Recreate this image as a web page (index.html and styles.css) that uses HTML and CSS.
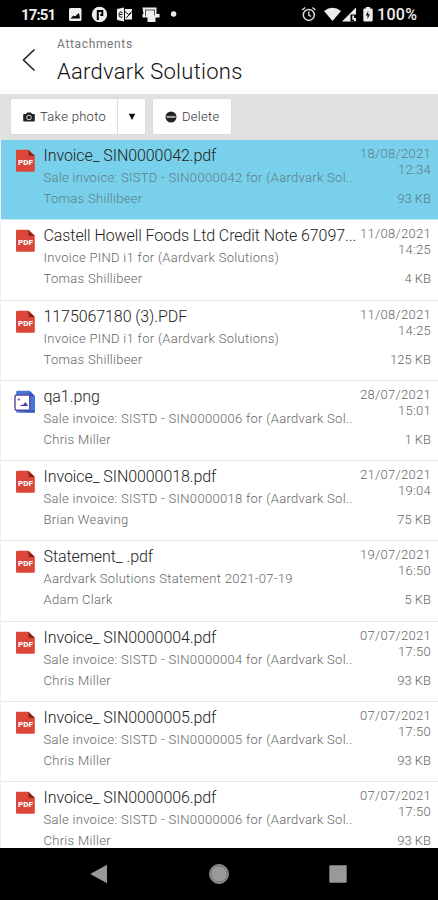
FILE: index.html
```html
<!DOCTYPE html>
<html lang="en">
<head>
<meta charset="utf-8">
<title>Attachments</title>
<link rel="stylesheet" href="styles.css">
</head>
<body>
<svg width="0" height="0" class="defs">
  <symbol id="pdf" viewBox="0 0 22 24">
    <path fill="#dc4639" d="M3.200 .7H14.500L20.800 7V21.500a1.200 1.200 0 0 1-1.200 1.200H3.200A1.200 1.200 0 0 1 2 21.500V1.900A1.200 1.200 0 0 1 3.200 .7z"/>
    <path fill="#8f2119" d="M14.500 .7L20.800 7H15.700A1.200 1.200 0 0 1 14.500 5.800z"/>
    <text x="11.400" y="15.500" text-anchor="middle" class="pdf-label">PDF</text>
  </symbol>
  <symbol id="png" viewBox="0 0 22 24">
    <path fill="#4775d9" d="M3 .7h12.500L21 6.200V22.500H2.200V1.500z"/>
    <path fill="#2f56bd" d="M15.500 .7L21 6.200H15.500zM15 20.500h6v2H4z"/>
    <rect x="1" y="5" width="14.800" height="15.200" rx="1.500" fill="#fff" stroke="#55489f" stroke-width="1.400"/>
    <circle cx="4.800" cy="9.500" r="1.100" fill="#55489f"/>
    <path fill="#493c9b" d="M6 16l2-1.500 1 .5 2.500-3 2.500 4z"/>
  </symbol>
</svg>
<div class="screen">
  <header class="status">
    <span class="clock">17:51</span>
    <svg class="notifications" width="112" height="18" viewBox="0 0 112 18" fill="#eee">
      <path fill-rule="evenodd" d="M2.500 2h9.500a1.500 1.500 0 0 1 1.500 1.500v10a1.500 1.500 0 0 1-1.500 1.500H2.500A1.500 1.500 0 0 1 1 13.500v-10A1.500 1.500 0 0 1 2.500 2zM2.500 12.500h9.500L11 7 7 10.500 5.500 9.500z"/>
      <circle cx="31.500" cy="8.500" r="7.700"/>
      <path d="M29.800 14V5h4.500v4h-2" fill="none" stroke="#000" stroke-width="2"/>
      <path d="M49 3l7-1.500v14L49 14z"/><path d="M57 3h7v10.500h-7z"/>
      <path d="M54.500 6.500q-3.500-1.500-3.500 2t3.500 2.500M51.500 8.500h3M57 5.500l3.500 3L64 5.500M58 12l5-5" stroke="#111" stroke-width="1" fill="none"/>
      <path d="M74.500 1.500h14v6.500h3v3.500h-4V16h-8v-4.500h-5V8h1z"/>
      <path d="M77.500 3.500v7M86.500 3.500v6M77.500 4h9" stroke="#555" stroke-width="1" fill="none"/>
      <circle cx="105.600" cy="8" r="2.700"/>
    </svg>
    <svg class="signals" width="72" height="18" viewBox="0 0 72 18" fill="#eee">
      <circle cx="7.800" cy="8.900" r="5.500" fill="none" stroke="#ddd" stroke-width="1.500"/>
      <path d="M7.800 5.500v3.700l2.300 1.300M1.200 4l3-2.500M14.400 4l-3-2.500" fill="none" stroke="#ddd" stroke-width="1.400"/>
      <path d="M23 5q8.500-6.500 17 0l-8.500 10z"/>
      <path d="M41 15.500L55 1.500v14z"/>
      <path d="M49.500 15.500V8.500H55v7z" fill="#000"/><path d="M51.300 9.500h1.800v2.500H55v3h-2v-1.200h-1.700z"/>
      <path d="M65 1h4v1.500h1.500a1.200 1.200 0 0 1 1.200 1.200v10.600a1.200 1.200 0 0 1-1.200 1.200h-7a1.200 1.200 0 0 1-1.200-1.200V3.700A1.200 1.200 0 0 1 63.500 2.500H65z"/>
      <path fill="#111" d="M67.200 4.800l-2.400 4.700h1.700v3.500l2.500-4.700h-1.800z"/>
    </svg>
    <span class="battery">100%</span>
  </header>

  <div class="heading">
    <svg class="back" width="14" height="24" viewBox="0 0 14 24"><path d="M12.500 1.500L1.500 12l11 10.500" fill="none" stroke="#222" stroke-width="1.600"/></svg>
    <div>
      <div class="crumb">Attachments</div>
      <h1>Aardvark Solutions</h1>
    </div>
  </div>

  <div class="toolbar">
    <div class="button split">
      <span class="main">
        <svg width="12" height="10" viewBox="0 0 12 10"><path fill="#222" d="M1 2h2l1-1.500h4L9 2h2a.8.8 0 0 1 .8.800v5.900a.8.8 0 0 1-.8.800H1a.8.8 0 0 1-.8-.8V2.800A.8.800 0 0 1 1 2z"/><circle cx="6" cy="5.500" r="2.300" fill="none" stroke="#ddd" stroke-width="1"/></svg>
        <span class="photo">Take photo</span>
      </span>
      <span class="caret"><svg width="8" height="8" viewBox="0 0 8 8"><path fill="#111" d="M.7.800h6.600L4 7z"/></svg></span>
    </div>
    <div class="button remove">
      <svg width="12" height="12" viewBox="0 0 12 12"><circle cx="6" cy="6" r="5.500" fill="#222"/><path fill="#aaa" d="M1.500 4.900h9v2h-9z"/></svg>
      <span class="del">Delete</span>
    </div>
  </div>

  <main class="list" id="list"></main>

  <nav class="nav">
    <svg width="18" height="20" viewBox="0 0 18 20"><path fill="#999" d="M.2 10L17 .8v18.400z"/></svg>
    <svg width="22" height="22" viewBox="0 0 22 22"><circle cx="11" cy="11" r="9.500" fill="#999" stroke="#888" stroke-width="1"/><circle cx="11" cy="11" r="8.200" fill="none" stroke="#666" stroke-width=".8"/></svg>
    <svg width="18" height="18" viewBox="0 0 18 18"><rect x=".3" y=".3" width="17.400" height="17.400" rx="1" fill="#999"/></svg>
  </nav>
</div>
<script src="app.js"></script>
</body>
</html>
```

FILE: app.js
```js
const rows = [
  ["pdf", "Invoice_ SIN0000042.pdf", "Sale invoice: SISTD - SIN0000042 for (Aardvark Sol..", "Tomas Shillibeer", "18/08/2021", "12:34", "93 KB"],
  ["pdf", "Castell Howell Foods Ltd Credit Note 67097...", "Invoice PIND i1 for (Aardvark Solutions)", "Tomas Shillibeer", "11/08/2021", "14:25", "4 KB"],
  ["pdf", "1175067180 (3).PDF", "Invoice PIND i1 for (Aardvark Solutions)", "Tomas Shillibeer", "11/08/2021", "14:25", "125 KB"],
  ["png", "qa1.png", "Sale invoice: SISTD - SIN0000006 for (Aardvark Sol..", "Chris Miller", "28/07/2021", "15:01", "1 KB"],
  ["pdf", "Invoice_ SIN0000018.pdf", "Sale invoice: SISTD - SIN0000018 for (Aardvark Sol..", "Brian Weaving", "21/07/2021", "19:04", "75 KB"],
  ["pdf", "Statement_ .pdf", "Aardvark Solutions Statement 2021-07-19", "Adam Clark", "19/07/2021", "16:50", "5 KB"],
  ["pdf", "Invoice_ SIN0000004.pdf", "Sale invoice: SISTD - SIN0000004 for (Aardvark Sol..", "Chris Miller", "07/07/2021", "17:50", "93 KB"],
  ["pdf", "Invoice_ SIN0000005.pdf", "Sale invoice: SISTD - SIN0000005 for (Aardvark Sol..", "Chris Miller", "07/07/2021", "17:50", "93 KB"],
  ["pdf", "Invoice_ SIN0000006.pdf", "Sale invoice: SISTD - SIN0000006 for (Aardvark Sol..", "Chris Miller", "07/07/2021", "17:50", "93 KB"]
];

document.getElementById("list").innerHTML = rows.map(([icon, name, note, author, date, time, size], i) => `
  <article class="row${i === 0 ? " selected" : ""}">
    <svg class="file" width="22" height="24"><use href="#${icon}"/></svg>
    <div class="info">
      <div class="name">${name}</div>
      <div class="note">${note}</div>
      <div class="author">${author}</div>
    </div>
    <div class="meta">
      <div class="when">${date}<br>${time}</div>
      <div class="size">${size}</div>
    </div>
  </article>`).join("");
```

FILE: styles.css
```css
* { box-sizing: border-box; }
body { margin: 0; background: #000; font-family: Roboto, "Liberation Sans", sans-serif; font-weight: 300; }
.defs { position: absolute; }
.screen { width: 438px; height: 900px; display: flex; flex-direction: column; overflow: hidden; }

.status { flex: none; height: 27px; display: flex; align-items: center; background: #000; color: #eee; padding: 2px 0 0 21px; white-space: nowrap; }
.clock { width: 47px; font-size: 15px; font-weight: 700; letter-spacing: -.9px; }
.signals { margin-left: 121px; }
.battery { margin-left: 4px; font-size: 16px; font-weight: 500; letter-spacing: .3px; }

.heading { flex: none; height: 67px; background: #fff; display: flex; padding: 9px 0 0 22px; color: #111; }
.back { margin: 12px 21px 0 0; }
.crumb { font-size: 12px; line-height: 16px; font-weight: 400; color: #777; letter-spacing: .65px; }
h1 { margin: 6px 0 0; font-size: 22px; line-height: 27px; font-weight: 300; letter-spacing: .27px; }

.toolbar { flex: none; height: 46px; background: #e1e1e1; padding: 5px 11px 6px; display: flex; gap: 8px; }
.button { background: #fff; display: flex; align-items: center; font-size: 13px; color: #333; box-shadow: 0 0 1px #bbb; white-space: nowrap; }
.split { width: 134px; }
.main { width: 107px; height: 100%; display: flex; align-items: center; padding-left: 12px; gap: 5px; border-right: 1px solid #ddd; }
.photo, .del { letter-spacing: .3px; }
.caret { flex: 1; display: flex; justify-content: center; }
.remove { width: 78px; padding-left: 12px; gap: 5px; }

.list { flex: none; height: 708px; overflow: hidden; background: #fff; border-left: 1px solid #f0f0f0; }
.row { height: 80.250px; display: flex; padding: 5px 7px 0 13px; border-bottom: 1px solid #e8e8e8; color: #666; }
.selected { background: #78d0ea; border-bottom-color: #c4e9f4; color: #5f7d88; }
.file { flex: none; margin-top: 4px; }
.pdf-label { font: 900 8px Roboto, sans-serif; fill: #fff; }
.info { flex: 1; min-width: 0; padding-left: 7.500px; white-space: nowrap; }
.name { font-size: 16px; line-height: 21px; color: #222; letter-spacing: -.08px; }
.note, .author { font-size: 13px; letter-spacing: .3px; }
.note { line-height: 23px; }
.author { line-height: 20px; }
.meta { flex: none; width: 74px; text-align: right; font-size: 13px; line-height: 16px; white-space: nowrap; }
.when { height: 44px; padding-top: 1px; letter-spacing: .3px; }
.size { line-height: 20px; }

.nav { flex: 1; display: flex; align-items: center; padding-left: 90px; }
.nav svg + svg { margin-left: 100px; }
.nav svg:last-child { margin-left: 99px; }
```
